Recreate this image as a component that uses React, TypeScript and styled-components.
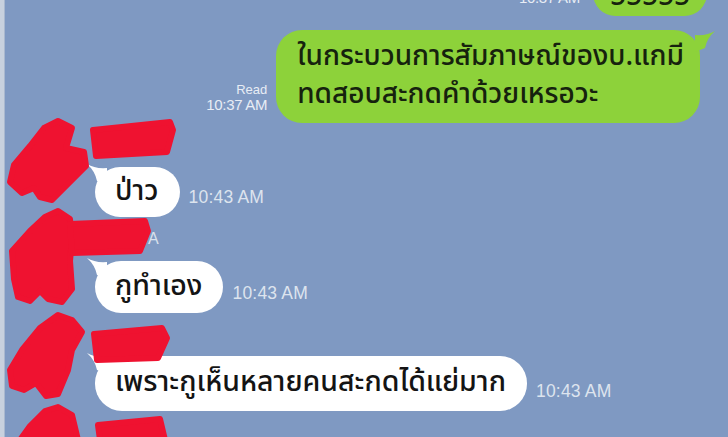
import React from "react";
import styled, { createGlobalStyle } from "styled-components";

const Global = createGlobalStyle`
  html, body { margin: 0; padding: 0; }
  body { background: #7f99c2; overflow: hidden; }
`;

const THAI = `"Noto Sans Thai", "Noto Sans Thai UI", "Thonburi", "Loma", "Garuda", "Tlwg Typo", "Noto Sans", sans-serif`;
const LATIN = `"Liberation Sans", Arial, sans-serif`;

const Page = styled.div`
  position: relative;
  width: 728px;
  height: 437px;
  overflow: hidden;
  background: linear-gradient(to right, #c8d1de 0 4px, #a9b8cf 4px 5px, #7f99c2 5px);
`;

const Chat = styled.div`
  display: flex;
  flex-direction: column;
`;

const OutRow = styled.div<{ $top?: number; $right: number }>`
  display: flex;
  justify-content: flex-end;
  align-items: flex-end;
  gap: 9px;
  margin-top: ${(p) => p.$top ?? 0}px;
  padding-right: ${(p) => p.$right}px;
`;

const Meta = styled.div<{ $gap?: number }>`
  display: flex;
  flex-direction: column;
  align-items: flex-end;
  margin-bottom: 11px;
  margin-right: ${(p) => p.$gap ?? 0}px;
  font-family: ${LATIN};
  color: #e8edf5;
`;

const ReadMark = styled.span`
  font-size: 13px;
  line-height: 14px;
`;

const MetaTime = styled.span`
  font-size: 15px;
  line-height: 15px;
  letter-spacing: -0.3px;
`;

const GreenBubble = styled.div<{ $h?: number }>`
  position: relative;
  background: #8dd23a;
  border-radius: 26px;
  padding: ${(p) => (p.$h ? "0 17px 0 17px" : "8px 16px 9px 21px")};
  font-family: ${THAI};
  font-size: 28px;
  font-weight: 500;
  line-height: 38px;
  color: #16220e;
  white-space: nowrap;
  ${(p) => (p.$h ? `height: ${p.$h}px; box-sizing: border-box; display: flex; align-items: flex-end;` : "")}
`;

const Line = styled.div``;

const OutTail = styled.svg`
  position: absolute;
  right: -17px;
  top: 0px;
  width: 24px;
  height: 22px;
`;

const InGroup = styled.div<{ $top?: number }>`
  position: relative;
  display: flex;
  flex-direction: column;
  padding-left: 95px;
  margin-top: ${(p) => p.$top ?? 0}px;
`;

const NameLine = styled.div<{ $indent?: number }>`
  height: 44px;
  box-sizing: border-box;
  padding-top: 13px;
  padding-left: ${(p) => p.$indent ?? 0}px;
  font-family: ${LATIN};
  font-size: 16px;
  line-height: 18px;
  color: #d9e1ec;
`;

const InRow = styled.div`
  display: flex;
  align-items: flex-end;
  gap: 9px;
`;

const WhiteBubble = styled.div<{ $h: number }>`
  position: relative;
  box-sizing: border-box;
  height: ${(p) => p.$h}px;
  display: flex;
  align-items: center;
  padding: 0 21px 2px 20px;
  background: #ffffff;
  border-radius: 27px;
  font-family: ${THAI};
  font-size: 28.5px;
  font-weight: 500;
  color: #141414;
  white-space: nowrap;
`;

const InTail = styled.svg`
  position: absolute;
  left: -10px;
  top: -4px;
  width: 24px;
  height: 22px;
`;

const InTime = styled.span`
  margin-bottom: 11px;
  font-family: ${LATIN};
  font-size: 17.5px;
  line-height: 17px;
  letter-spacing: 0.2px;
  color: #dde4ee;
`;

const Redaction = styled.svg`
  position: absolute;
  left: 0;
  top: -10px;
  width: 180px;
  height: 130px;
  pointer-events: none;
`;

type Poly = string;

const Scribble: React.FC<{ shapes: Poly[] }> = ({ shapes }) => (
  <Redaction viewBox="0 0 180 130">
    {shapes.map((pts, i) => (
      <polygon
        key={i}
        points={pts}
        fill="#ef1230"
        stroke="#ef1230"
        strokeWidth={6}
        strokeLinejoin="round"
      />
    ))}
  </Redaction>
);

const Tail = () => (
  <InTail viewBox="0 0 24 22">
    <path d="M2 1 Q 10 6 22 5 L 22 22 L 12 18 Q 10 8 2 1 Z" fill="#ffffff" />
  </InTail>
);

const GTail = () => (
  <OutTail viewBox="0 0 24 22">
    <path d="M22 1 Q 14 6 2 5 L 2 22 L 12 18 Q 14 8 22 1 Z" fill="#8dd23a" />
  </OutTail>
);

const groups = [
  {
    top: 0,
    name: "",
    indent: 0,
    text: "ป่าว",
    h: 50,
    time: "10:43 AM",
    shapes: [
      "58,8 72,15 66,35 84,39 86,53 52,87 40,84 34,75 22,80 10,69 14,52 30,33 44,15",
      "93,17 170,9 173,17 167,39 96,43",
    ],
  },
  {
    top: 0,
    name: "A",
    indent: 53,
    text: "กูทำเอง",
    h: 52,
    time: "10:43 AM",
    shapes: [
      "58,4 70,12 72,32 70,54 72,82 62,95 48,92 40,84 30,94 18,90 14,72 12,44 30,24 45,10",
      "70,17 145,14 148,24 140,44 72,46",
    ],
  },
  {
    top: -1,
    name: "",
    indent: 0,
    text: "เพราะกูเห็นหลายคนสะกดได้แย่มาก",
    h: 55,
    time: "10:43 AM",
    shapes: [
      "58,13 72,18 82,30 72,48 68,68 58,92 46,94 36,81 24,88 12,84 10,68 22,48 40,26",
      "94,32 162,26 167,36 158,56 97,58",
    ],
  },
];

export default function App() {
  return (
    <>
      <Global />
      <Page>
        <Chat>
          <OutRow $top={-29} $right={21}>
            <Meta $gap={4}>
              <MetaTime>10:37 AM</MetaTime>
            </Meta>
            <GreenBubble $h={45}>
              <Line>55555</Line>
            </GreenBubble>
          </OutRow>
          <OutRow $top={14} $right={28}>
            <Meta>
              <ReadMark>Read</ReadMark>
              <MetaTime>10:37 AM</MetaTime>
            </Meta>
            <GreenBubble>
              <GTail />
              <Line>ในกระบวนการสัมภาษณ์ของบ.แกมี</Line>
              <Line>ทดสอบสะกดคำด้วยเหรอวะ</Line>
            </GreenBubble>
          </OutRow>
          {groups.map((g, i) => (
            <InGroup key={i} $top={g.top}>
              <NameLine $indent={g.indent}>{g.name}</NameLine>
              <InRow>
                <WhiteBubble $h={g.h}>
                  <Tail />
                  {g.text}
                </WhiteBubble>
                <InTime>{g.time}</InTime>
              </InRow>
              <Scribble shapes={g.shapes} />
            </InGroup>
          ))}
          <InGroup $top={-1}>
            <NameLine />
            <Scribble
              shapes={[
                "58,7 72,15 78,40 20,40 30,26 45,11",
                "98,25 160,19 165,40 100,40",
              ]}
            />
          </InGroup>
        </Chat>
      </Page>
    </>
  );
}
